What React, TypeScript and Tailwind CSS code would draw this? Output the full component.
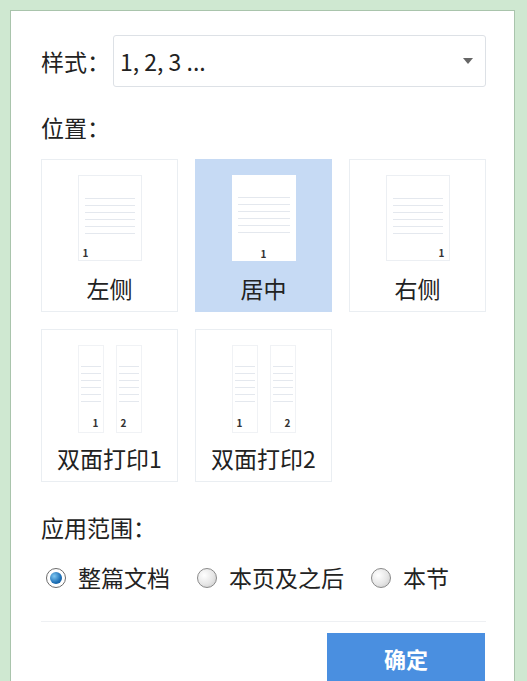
import { useState } from "react";

type Pos = "left" | "center" | "right" | "duplex1" | "duplex2";

const font = { fontFamily: '"Noto Sans CJK SC", "Noto Sans", sans-serif' };

function Lines({ className = "" }: { className?: string }) {
	return (
		<div className={`flex flex-col gap-[6px] ${className}`}>
			{[0, 1, 2, 3, 4, 5].map((i) => (
				<div key={i} className="h-px bg-[#e4e8ee]" />
			))}
		</div>
	);
}

function SinglePage({ align, active }: { align: "left" | "center" | "right"; active: boolean }) {
	const numAlign =
		align === "left" ? "justify-start pl-[4px]" : align === "right" ? "justify-end pr-[4px]" : "justify-center";
	return (
		<div
			className={`flex h-[86px] w-[64px] flex-col bg-white ${active ? "" : "border border-[#eceff3]"}`}
		>
			<Lines className="mx-[6px] mt-[22px]" />
			<div className={`mt-auto mb-[2px] flex text-[10px] font-bold leading-none text-[#333] ${numAlign}`}>1</div>
		</div>
	);
}

function HalfPage({ num, side }: { num: string; side: "left" | "right" | "center" }) {
	const numAlign =
		side === "left" ? "justify-start pl-[4px]" : side === "right" ? "justify-end pr-[4px]" : "justify-center";
	return (
		<div className="flex h-[88px] w-[26px] flex-col border border-[#f0f2f5] bg-white">
			<Lines className="mx-[2px] mt-[20px]" />
			<div className={`mt-auto mb-[4px] flex text-[10px] font-bold leading-none text-[#333] ${numAlign}`}>{num}</div>
		</div>
	);
}

function Tile({
	label,
	active,
	onClick,
	children,
}: {
	label: string;
	active: boolean;
	onClick: () => void;
	children: React.ReactNode;
}) {
	return (
		<button
			type="button"
			onClick={onClick}
			className={`flex h-[153px] flex-col items-center border ${
				active ? "border-[#c6daf4] bg-[#c6daf4]" : "border-[#eaeef2] bg-white"
			}`}
		>
			<div className="mt-[15px] flex h-[86px] items-start justify-center">{children}</div>
			<div className="mt-[16px] text-[23px] leading-none text-[#222]">{label}</div>
		</button>
	);
}

function Radio({ checked }: { checked: boolean }) {
	return checked ? (
		<span className="flex h-[20px] w-[20px] items-center justify-center rounded-full border border-[#6b6b6b] bg-white">
			<span className="h-[12px] w-[12px] rounded-full bg-[radial-gradient(circle_at_35%_35%,#7fc7f2,#1d6fb5_60%,#0c4a86)]" />
		</span>
	) : (
		<span className="h-[20px] w-[20px] rounded-full border border-[#8a8a8a] bg-[radial-gradient(circle_at_35%_35%,#ffffff,#e6e6e6_55%,#c4c4c4)]" />
	);
}

export default function App() {
	const [pos, setPos] = useState<Pos>("center");
	const [scope, setScope] = useState(0);
	const scopes = ["整篇文档", "本页及之后", "本节"];

	return (
		<div className="min-h-[681px] bg-[#cfe8d1] pl-[10px] pr-[12px] pt-[10px]" style={font}>
			<div className="min-h-[671px] border-l border-r border-t border-[#a9c4ac] bg-white pl-[30px] pr-[28px] pt-[24px] text-[#222]">
				<div className="flex items-center">
					<span className="w-[72px] text-[23px]">样式：</span>
					<div className="flex h-[52px] flex-1 items-center rounded-[3px] border border-[#dde1e6] bg-white pl-[6px] pr-[12px]">
						<span className="flex-1 text-[23px]">1, 2, 3 ...</span>
						<svg width="10" height="6" viewBox="0 0 10 6">
							<path d="M0 0h10L5 6z" fill="#666" />
						</svg>
					</div>
				</div>

				<div className="mt-[25px] text-[23px] leading-[30px]">位置：</div>

				<div className="mt-[17px] grid grid-cols-[137px_137px_137px] gap-[17px]">
					<Tile label="左侧" active={pos === "left"} onClick={() => setPos("left")}>
						<SinglePage align="left" active={pos === "left"} />
					</Tile>
					<Tile label="居中" active={pos === "center"} onClick={() => setPos("center")}>
						<SinglePage align="center" active={pos === "center"} />
					</Tile>
					<Tile label="右侧" active={pos === "right"} onClick={() => setPos("right")}>
						<SinglePage align="right" active={pos === "right"} />
					</Tile>
					<Tile label="双面打印1" active={pos === "duplex1"} onClick={() => setPos("duplex1")}>
						<div className="flex gap-[12px]">
							<HalfPage num="1" side="right" />
							<HalfPage num="2" side="left" />
						</div>
					</Tile>
					<Tile label="双面打印2" active={pos === "duplex2"} onClick={() => setPos("duplex2")}>
						<div className="flex gap-[12px]">
							<HalfPage num="1" side="left" />
							<HalfPage num="2" side="right" />
						</div>
					</Tile>
				</div>

				<div className="mt-[30px] text-[23px] leading-[30px]">应用范围：</div>

				<div className="mt-[24px] flex items-center">
					{scopes.map((s, i) => (
						<button
							key={s}
							type="button"
							onClick={() => setScope(i)}
							className="mr-[22px] flex items-center gap-[12px] pl-[5px]"
						>
							<Radio checked={scope === i} />
							<span className="text-[23px] leading-none">{s}</span>
						</button>
					))}
				</div>

				<div className="mt-[32px] h-px bg-[#eef0f3]" />

				<div className="mt-[11px] flex justify-end">
					<button
						type="button"
						className="mr-[1px] h-[50px] w-[158px] bg-[#4a8fe0] text-[22px] font-bold text-white"
					>
						确定
					</button>
				</div>
			</div>
		</div>
	);
}
